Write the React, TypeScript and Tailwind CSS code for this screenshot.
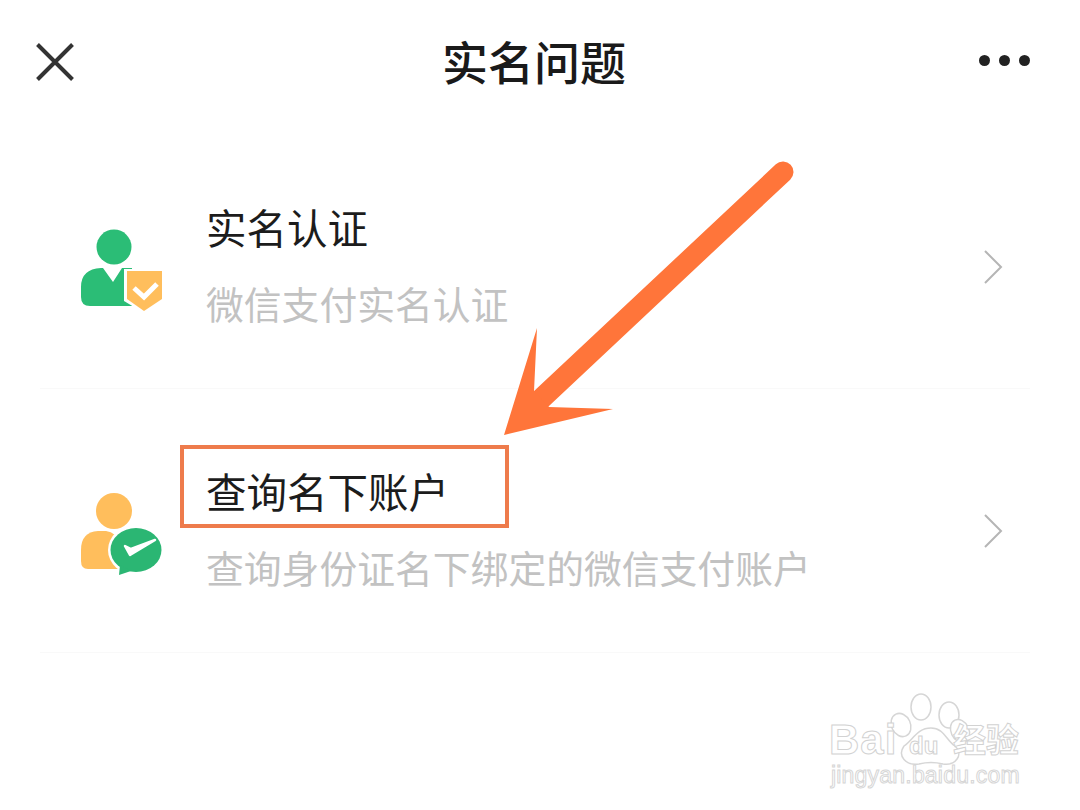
const CJK = "font-['Noto_Sans_CJK_SC','Liberation_Sans',sans-serif]";

const Chevron = () => (
  <svg width="20" height="36" viewBox="0 0 20 36" fill="none" className="mt-[20px] shrink-0">
    <path d="M2 2 L18 18 L2 34" stroke="#b5b5b5" strokeWidth="2" />
  </svg>
);

const VerifyIcon = () => (
  <svg width="85" height="90" viewBox="80 225 85 90" className="shrink-0">
    <circle cx="114" cy="246" r="17.5" fill="#2bbd76" />
    <path d="M81 296 V286 Q81 268 101 267 H103 L113 281 L122 267 H132 V305 H90 Q81 305 81 296 Z" fill="#2bbd76" />
    <path d="M124 268 H164 V300 L144 312 L124 300 Z" fill="#fff" />
    <path d="M127 270 H162 V298 L144 310 L127 298 Z" fill="#ffbe5c" />
    <path d="M134 287 L144 296 L157 283" fill="none" stroke="#fff" strokeWidth="5" />
  </svg>
);

const AccountIcon = () => (
  <svg width="85" height="90" viewBox="80 490 85 90" className="shrink-0">
    <circle cx="114" cy="511" r="18" fill="#ffbe5c" />
    <path d="M81 561 V550 Q81 532 98 531 H106 Q116 532 122 545 L128 569 H88 Q81 569 81 561 Z" fill="#ffbe5c" />
    <ellipse cx="136" cy="550" rx="28" ry="25" fill="#fff" />
    <ellipse cx="136" cy="550" rx="25.5" ry="22" fill="#2bb673" />
    <path d="M119 575 L120 565 L131 571 Z" fill="#2bb673" />
    <path d="M125 546 L130 555 L155 540 L131 549 Z" fill="#fff" stroke="#fff" strokeWidth="2.5" strokeLinejoin="round" />
  </svg>
);

const Row = ({ title, desc, icon }: { title: string; desc: string; icon: React.ReactNode }) => (
  <div className="mr-[50px] ml-[40px] flex h-[264px] items-center border-b border-[#f9f9f9] pr-[27px]">
    <div className="flex w-[166px] shrink-0 pt-[28px] pl-[40px]">{icon}</div>
    <div className="flex-1 pt-[16px]">
      <div className="text-[40.5px] leading-[56px] text-[#1c1c1c]">{title}</div>
      <div className="mt-[20px] text-[37.8px] leading-[56px] text-[#c2c2c2]">{desc}</div>
    </div>
    <Chevron />
  </div>
);

const App = () => {
  return (
    <div className={`relative h-[810px] w-[1080px] overflow-hidden bg-white ${CJK}`}>
      <header className="flex h-[125px] items-center justify-between pr-[50px] pl-[36px]">
        <svg width="38" height="38" viewBox="0 0 38 38" fill="none" className="-mt-[2px]">
          <path d="M1.5 1.5 L36.5 36.5 M36.5 1.5 L1.5 36.5" stroke="#333" strokeWidth="4" />
        </svg>
        <h1 className="-mt-[6px] ml-[15px] text-[46px] leading-none font-medium text-[#1a1a1a]">实名问题</h1>
        <div className="-mt-[4px] flex gap-[9px]">
          <span className="h-[11px] w-[11px] rounded-full bg-[#222]" />
          <span className="h-[11px] w-[11px] rounded-full bg-[#222]" />
          <span className="h-[11px] w-[11px] rounded-full bg-[#222]" />
        </div>
      </header>

      <Row title="实名认证" desc="微信支付实名认证" icon={<VerifyIcon />} />
      <Row title="查询名下账户" desc="查询身份证名下绑定的微信支付账户" icon={<AccountIcon />} />

      {/* annotation drawn over the screen */}
      <svg className="absolute top-0 left-0" width="1080" height="810" viewBox="0 0 1080 810" fill="none">
        <line x1="783" y1="172" x2="541" y2="399" stroke="#ff753a" strokeWidth="21" strokeLinecap="round" />
        <path d="M504 435 L537 328 L534 391 L549 407 L613 409 Z" fill="#ff753a" />
      </svg>
      <div className="absolute top-[445px] left-[180px] h-[83px] w-[329px] border-4 border-[#ee7b4c]" />

      {/* watermark */}
      <div className="absolute top-[690px] left-[825px] h-[110px] w-[200px]">
        <svg className="absolute top-0 left-0" width="200" height="80" viewBox="0 0 200 80" fill="#fff" stroke="#d6d6d6" strokeWidth="1.5">
          <ellipse cx="96" cy="17" rx="10" ry="13" />
          <ellipse cx="124" cy="25" rx="10" ry="13" />
          <ellipse cx="76" cy="35" rx="9.5" ry="12" transform="rotate(-25 76 35)" />
          <ellipse cx="135" cy="41" rx="9" ry="12" transform="rotate(-25 135 41)" />
          <path d="M106 38 C119 38 121 50 130 56 C139 64 131 76 118 74 C110 72 102 72 94 74 C81 76 72 66 79 56 C88 50 92 38 106 38 Z" />
        </svg>
        <span className="absolute top-[29px] left-[4px] font-['Liberation_Sans',sans-serif] text-[42px] leading-none font-bold tracking-[1px] text-white [-webkit-text-stroke:1px_#d2d2d2]">Bai</span>
        <span className="absolute top-[44px] left-[84px] font-['Liberation_Sans',sans-serif] text-[24px] leading-none font-bold text-white [-webkit-text-stroke:1px_#d2d2d2]">du</span>
        <span className="absolute top-[32px] left-[128px] text-[33px] leading-none font-bold text-white [-webkit-text-stroke:1px_#d2d2d2]">经验</span>
        <span className="absolute top-[74px] left-[6px] font-['Liberation_Sans',sans-serif] text-[23px] leading-none tracking-[0.2px] text-white [-webkit-text-stroke:1px_#d6d6d6]">jingyan.baidu.com</span>
      </div>
    </div>
  );
};

export default App;
